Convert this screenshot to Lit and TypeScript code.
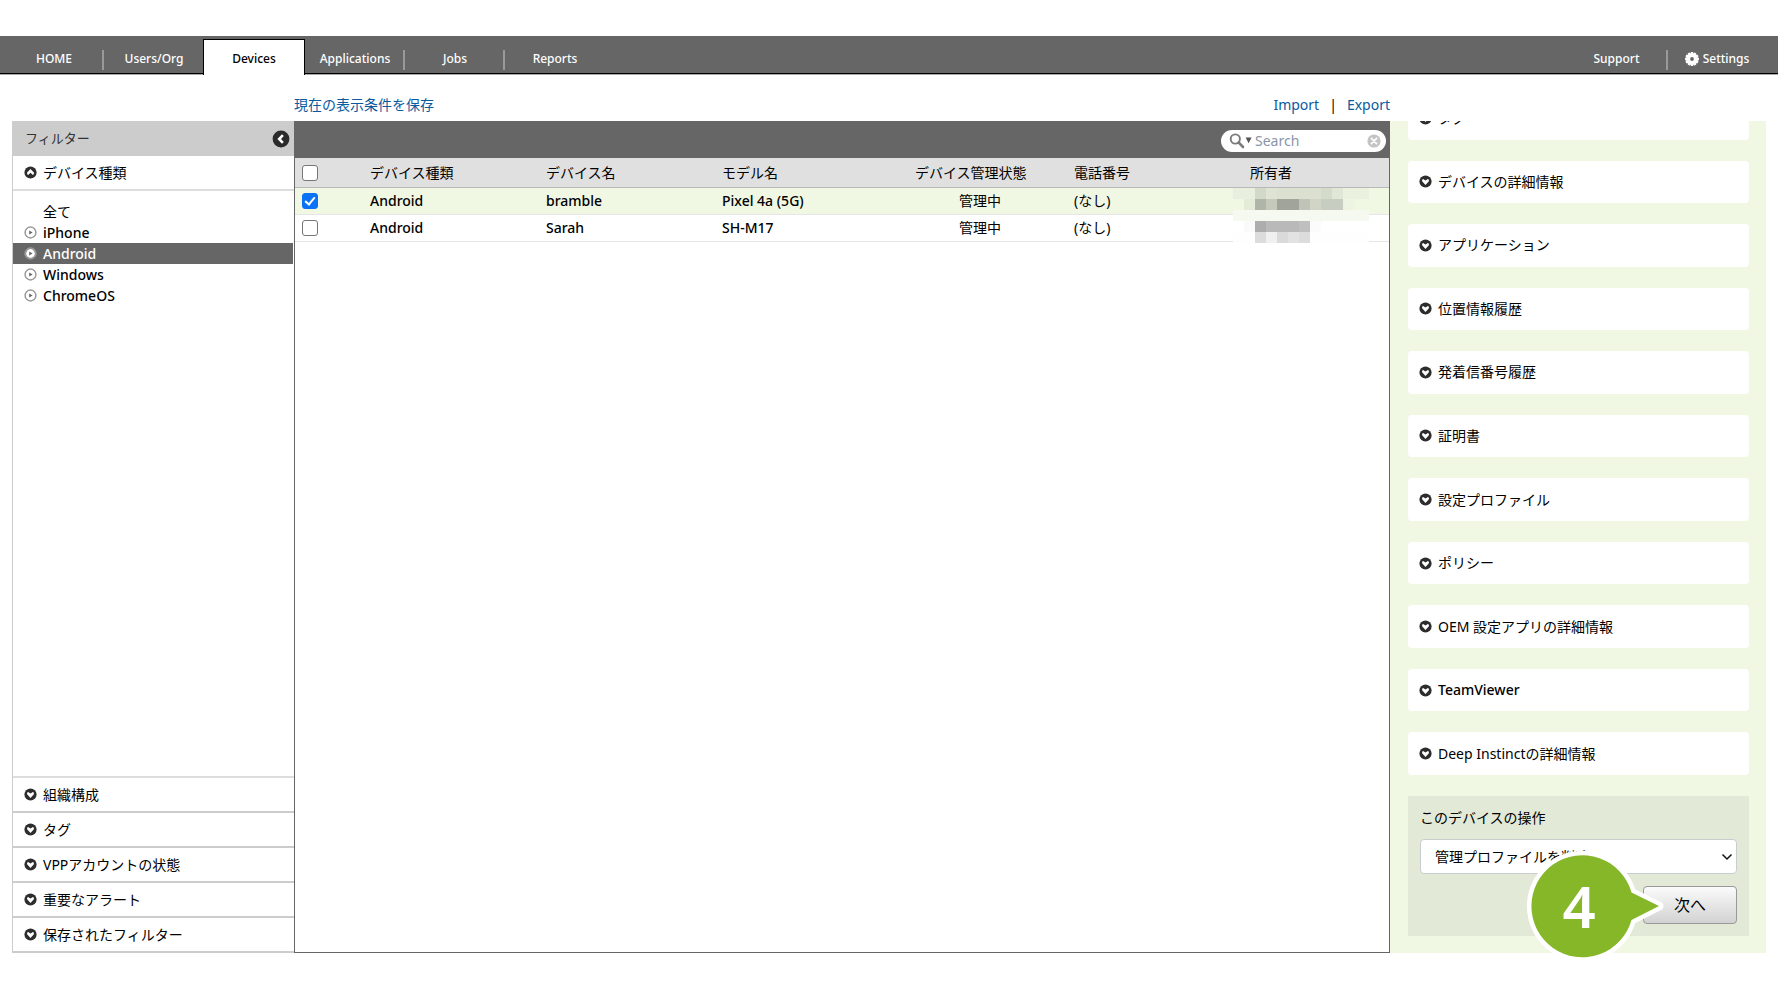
import { LitElement, html, css, svg } from "lit";
import { customElement, property, state } from "lit/decorators.js";
import { classMap } from "lit/directives/class-map.js";

const FONT = css`"Noto Sans", "Noto Sans CJK JP", sans-serif`;

/* Latin-only labels are set in medium, Japanese ones in regular. */
const isLatin = (text: string) => /^[\x20-\x7e]+$/.test(text);

type IconName = "up" | "down" | "back" | "play" | "gear" | "lens" | "clear";

@customElement("ui-icon")
export class UiIcon extends LitElement {
  @property() name: IconName = "down";

  static styles = css`
    :host {
      display: inline-flex;
      flex: none;
      width: 13px;
      height: 13px;
    }
    :host([name="back"]) {
      width: 18px;
      height: 18px;
    }
    :host([name="gear"]) {
      width: 14px;
      height: 14px;
    }
    :host([name="lens"]) {
      width: 23px;
      height: 16px;
    }
    :host([name="clear"]) {
      width: 14px;
      height: 14px;
    }
    svg {
      width: 100%;
      height: 100%;
      display: block;
    }
  `;

  render() {
    switch (this.name) {
      case "up":
        return html`<svg viewBox="0 0 13 13" aria-hidden="true">
          <circle cx="6.5" cy="6.5" r="6.1" fill="#2d2d2d" />
          <path d="M6.5 2.9 9.9 6.6Q10.4 8.6 8.9 8.9L6.5 6.8 4.1 8.9Q2.6 8.6 3.1 6.6Z" fill="#fff" />
        </svg>`;
      case "down":
        return html`<svg viewBox="0 0 13 13" aria-hidden="true">
          <circle cx="6.5" cy="6.5" r="6.1" fill="#2d2d2d" />
          <path d="M6.5 9.9 3.1 6.2Q2.6 4.2 4.1 3.9L6.5 5.5 8.9 3.9Q10.4 4.2 9.9 6.2Z" fill="#fff" />
        </svg>`;
      case "back":
        return html`<svg viewBox="0 0 18 18" aria-hidden="true">
          <circle cx="9" cy="9" r="8.4" fill="#2b2b2b" />
          <path d="M10.9 5.2 7.2 9l3.7 3.8" fill="none" stroke="#fff" stroke-width="2.6" />
        </svg>`;
      case "play":
        return html`<svg viewBox="0 0 13 13" aria-hidden="true">
          <circle cx="6.5" cy="6.5" r="5.4" fill="none" stroke="#9a9a9a" stroke-width="1.5" />
          <circle cx="6.5" cy="6.5" r="4.4" fill="#fff" />
          <path d="M5.2 4.4 8.6 6.5 5.2 8.6Z" fill="#666" />
        </svg>`;
      case "gear":
        return html`<svg viewBox="0 0 14 14" aria-hidden="true">
          ${[0, 30, 60, 90, 120, 150].map(
            (a) => svg`<rect x="5.6" y="0" width="2.8" height="14" rx="1" fill="#fff" transform="rotate(${a} 7 7)" />`,
          )}
          <circle cx="7" cy="7" r="5.8" fill="#fff" />
          <circle cx="7" cy="7" r="1.9" fill="#666" />
        </svg>`;
      case "lens":
        return html`<svg viewBox="0 0 23 16" aria-hidden="true">
          <circle cx="6.3" cy="6" r="4.6" fill="none" stroke="#7b7b7b" stroke-width="1.9" />
          <path d="M9.6 9.4 14 14" stroke="#7b7b7b" stroke-width="2.6" stroke-linecap="round" />
          <path d="M16.6 4.4h6l-3 5.8Z" fill="#555" />
        </svg>`;
      case "clear":
        return html`<svg viewBox="0 0 14 14" aria-hidden="true">
          <circle cx="7" cy="7" r="6.6" fill="#c4c4c4" />
          <path d="M4.4 4.4 9.6 9.6M9.6 4.4 4.4 9.6" stroke="#fff" stroke-width="1.7" stroke-linecap="round" />
        </svg>`;
    }
  }
}

@customElement("nav-bar")
export class NavBar extends LitElement {
  @state() private active = "Devices";

  static styles = css`
    :host {
      display: block;
      font: 500 12px/20px ${FONT};
    }
    .bar {
      display: flex;
      align-items: stretch;
      height: 37px;
      padding-left: 4px;
      background: #666;
      border-bottom: 1px solid #000;
      box-shadow: 0 1px 0 #aaa;
    }
    .tab {
      display: flex;
      align-items: center;
      justify-content: center;
      box-sizing: border-box;
      width: 100px;
      padding-top: 8px;
      color: #fff;
      text-decoration: none;
    }
    .divided {
      background: linear-gradient(#999, #999) right 14px / 2px 20px no-repeat;
    }
    .active {
      position: relative;
      width: 102px;
      margin: 3px 0 -2px -1px;
      padding-top: 3px;
      color: #000;
      background: #fff;
      border: 1px solid #000;
      border-bottom: 0;
    }
    .side {
      display: flex;
      margin-left: auto;
    }
    .support {
      width: 103px;
    }
    .settings {
      width: 110px;
      gap: 4px;
      padding-right: 12px;
    }
  `;

  render() {
    const tabs = ["HOME", "Users/Org", "Devices", "Applications", "Jobs", "Reports"];
    return html`<nav class="bar">
      ${tabs.map((t) => {
        const active = t === this.active;
        const divided = t === "HOME" || t === "Applications" || t === "Jobs";
        return html`<a
          href="#"
          class=${classMap({ tab: true, active, divided: divided && !active })}
          @click=${(e: Event) => {
            e.preventDefault();
            this.active = t;
          }}
          >${t}</a
        >`;
      })}
      <div class="side">
        <a href="#" class="tab support divided">Support</a>
        <a href="#" class="tab settings"><ui-icon name="gear"></ui-icon>Settings</a>
      </div>
    </nav>`;
  }
}

@customElement("filter-panel")
export class FilterPanel extends LitElement {
  @state() private selected = "Android";

  static styles = css`
    :host {
      display: flex;
      flex-direction: column;
      box-sizing: border-box;
      font: 400 14px/20px ${FONT};
      color: #000;
      border-left: 1px solid #ccc;
    }
    button {
      box-sizing: border-box;
      font: inherit;
      color: inherit;
      background: none;
      border: 0;
      padding: 0;
      text-align: left;
      cursor: pointer;
    }
    .head {
      display: flex;
      align-items: center;
      justify-content: space-between;
      height: 35px;
      padding: 0 4px 0 12px;
      color: #333;
      font-size: 13px;
      background: #ccc;
    }
    .title {
      margin: 0 0 2px;
      font: inherit;
    }
    .collapse {
      display: flex;
    }
    .section {
      display: flex;
      align-items: center;
      gap: 6px;
      height: 35px;
      padding: 0 11px;
      border-bottom: 2px solid #ccc;
    }
    .open {
      border-color: #ddd;
    }
    .list {
      list-style: none;
      margin: 0;
      padding: 10px 1px 0 0;
      flex: 1;
      border-bottom: 2px solid #ddd;
    }
    .item {
      display: flex;
      align-items: center;
      gap: 6px;
      width: 100%;
      height: 21px;
      padding: 0 11px;
    }
    .latin {
      font-weight: 500;
    }
    .all {
      padding-left: 30px;
    }
    .selected {
      color: #fff;
      background: #666;
    }
  `;

  render() {
    return html`
      <div class="head">
        <h2 class="title">フィルター</h2>
        <button class="collapse" aria-label="フィルター"><ui-icon name="back"></ui-icon></button>
      </div>
      <button class="section open"><ui-icon name="up"></ui-icon>デバイス種類</button>
      <ul class="list">
        ${["全て", "iPhone", "Android", "Windows", "ChromeOS"].map(
          (t, i) => html`<li>
            <button
              class=${classMap({ item: true, latin: isLatin(t), all: i === 0, selected: t === this.selected })}
              @click=${() => (this.selected = t)}
            >
              ${i === 0 ? "" : html`<ui-icon name="play"></ui-icon>`}${t}
            </button>
          </li>`,
        )}
      </ul>
      ${["組織構成", "タグ", "VPPアカウントの状態", "重要なアラート", "保存されたフィルター"].map(
        (t) => html`<button class="section"><ui-icon name="down"></ui-icon>${t}</button>`,
      )}
    `;
  }
}

interface Device {
  type: string;
  name: string;
  model: string;
  status: string;
  phone: string;
}

const DEVICES: Device[] = [
  { type: "Android", name: "bramble", model: "Pixel 4a (5G)", status: "管理中", phone: "(なし)" },
  { type: "Android", name: "Sarah", model: "SH-M17", status: "管理中", phone: "(なし)" },
];

/* Redaction tiles over the owner column: [column, row, span, colour] on an 11px grid. */
const TILES: [number, number, number, string][] = [
  [0, 0, 2, "#e9efdf"], [2, 0, 1, "#d2d9c8"], [3, 0, 1, "#dee4d4"], [4, 0, 4, "#dbe0d0"],
  [8, 0, 1, "#d5dbca"], [9, 0, 1, "#e1e7d7"], [10, 0, 3, "#eaf1df"],
  [1, 1, 1, "#e4ebd9"], [2, 1, 1, "#b0b5aa"], [3, 1, 1, "#c4c9bc"], [4, 1, 2, "#a0a49a"],
  [6, 1, 1, "#bfc4b8"], [7, 1, 1, "#d0d5c7"], [8, 1, 2, "#c8cdc1"], [10, 1, 1, "#edf4e2"],
  [0, 2, 13, "#f6f9ef"],
  [1, 3, 1, "#fafafa"], [2, 3, 1, "#adadad"], [3, 3, 3, "#b9b9b9"], [6, 3, 1, "#bfbfbf"], [7, 3, 1, "#fbfbfb"],
  [0, 4, 2, "#fefefe"], [2, 4, 1, "#dcdcdc"], [3, 4, 1, "#f0f0f0"], [4, 4, 1, "#dadada"],
  [5, 4, 1, "#e2e2e2"], [6, 4, 1, "#dcdcdc"], [7, 4, 6, "#fefefe"],
];

@customElement("device-table")
export class DeviceTable extends LitElement {
  @state() private checked = new Set<string>(["bramble"]);

  static styles = css`
    :host {
      display: block;
      box-sizing: border-box;
      border: 1px solid #666;
      background: #fff;
      font: 400 14px/20px ${FONT};
      color: #000;
    }
    .toolbar {
      display: flex;
      align-items: center;
      justify-content: flex-end;
      box-sizing: border-box;
      height: 36px;
      padding: 2px 3px 0;
      background: #666;
    }
    .search {
      display: flex;
      align-items: center;
      box-sizing: border-box;
      width: 165px;
      height: 22px;
      padding: 0 5px 0 8px;
      gap: 3px;
      border-radius: 11px;
      background: #fff;
    }
    .field {
      flex: 1;
      min-width: 0;
      padding: 0;
      border: 0;
      outline: 0;
      background: none;
      font: 400 14px/20px ${FONT};
    }
    .field::placeholder {
      color: #8a94a8;
      opacity: 1;
    }
    .clear {
      display: flex;
      padding: 0;
      border: 0;
      background: none;
    }
    .grid {
      width: 100%;
      table-layout: fixed;
      border-collapse: separate;
      border-spacing: 0;
    }
    .c-check {
      width: 75px;
    }
    .c-wide {
      width: 176px;
    }
    .c-last {
      width: auto;
    }
    th,
    td {
      box-sizing: border-box;
      padding: 0;
      text-align: left;
      font-weight: 400;
      white-space: nowrap;
    }
    .latin {
      font-weight: 500;
    }
    th {
      height: 30px;
      background: #e0e0e0;
      border-bottom: 1px solid #b8b8b8;
    }
    td {
      height: 27px;
      border-bottom: 1px solid #e6e6e6;
    }
    .row-on td {
      background: #f0f7e3;
    }
    .th-status {
      padding-left: 17px;
    }
    .td-status {
      padding-right: 12px;
      text-align: center;
    }
    .check {
      padding-left: 7px;
    }
    .box {
      appearance: none;
      display: block;
      box-sizing: border-box;
      width: 16px;
      height: 16px;
      margin: 0;
      border: 1px solid #767676;
      border-radius: 3px;
      background: #fff;
    }
    .box:checked {
      border-color: #0a72f5;
      background: #0a72f5;
    }
    .box:checked::before {
      content: "";
      display: block;
      width: 4px;
      height: 8px;
      margin: 1px 0 0 4px;
      border: solid #fff;
      border-width: 0 2px 2px 0;
      transform: rotate(40deg);
    }
    .owner {
      position: relative;
    }
    .tiles {
      position: absolute;
      left: -17px;
      top: 0;
      z-index: 1;
      width: 136px;
      height: 55px;
    }
  `;

  private toggle(name: string) {
    const next = new Set(this.checked);
    next.has(name) ? next.delete(name) : next.add(name);
    this.checked = next;
  }

  render() {
    return html`
      <div class="toolbar">
        <div class="search">
          <ui-icon name="lens"></ui-icon>
          <input class="field" type="text" placeholder="Search" aria-label="Search" />
          <button class="clear" aria-label="Clear"><ui-icon name="clear"></ui-icon></button>
        </div>
      </div>
      <table class="grid">
        <colgroup>
          <col class="c-check" />
          <col class="c-wide" />
          <col class="c-wide" />
          <col class="c-wide" />
          <col class="c-wide" />
          <col class="c-wide" />
          <col class="c-last" />
        </colgroup>
        <thead>
          <tr>
            <th class="check"><input class="box" type="checkbox" aria-label="全て" /></th>
            <th>デバイス種類</th>
            <th>デバイス名</th>
            <th>モデル名</th>
            <th class="th-status">デバイス管理状態</th>
            <th>電話番号</th>
            <th>所有者</th>
          </tr>
        </thead>
        <tbody>
          ${DEVICES.map((d, i) => {
            const on = this.checked.has(d.name);
            return html`<tr class=${classMap({ "row-on": on })}>
              <td class="check">
                <input
                  class="box"
                  type="checkbox"
                  aria-label=${d.name}
                  .checked=${on}
                  @change=${() => this.toggle(d.name)}
                />
              </td>
              <td class="latin">${d.type}</td>
              <td class="latin">${d.name}</td>
              <td class="latin">${d.model}</td>
              <td class="td-status">${d.status}</td>
              <td>${d.phone}</td>
              <td class="owner">
                ${i === 0
                  ? html`<svg class="tiles" viewBox="0 0 136 55" shape-rendering="crispEdges" aria-hidden="true">
                      ${TILES.map(
                        ([x, y, w, c]) =>
                          svg`<rect x=${x * 11} y=${y * 11} width=${w * 11} height="11" fill=${c} />`,
                      )}
                    </svg>`
                  : ""}
              </td>
            </tr>`;
          })}
        </tbody>
      </table>
    `;
  }
}

@customElement("detail-panel")
export class DetailPanel extends LitElement {
  static styles = css`
    :host {
      display: flex;
      flex-direction: column;
      box-sizing: border-box;
      padding: 0 17px 17px 18px;
      background: #f0f7e3;
      font: 400 14px/20px ${FONT};
      color: #000;
    }
    .scroll {
      display: flex;
      flex-direction: column;
      flex: 1;
      overflow: hidden;
    }
    .cards {
      display: grid;
      grid-auto-rows: 1fr;
      gap: 21px;
      flex: 1;
      margin-top: -24px;
    }
    .card {
      display: flex;
      align-items: center;
      gap: 6px;
      padding: 0 11px;
      border: 0;
      border-radius: 4px;
      background: #fff;
      font: inherit;
      color: inherit;
      text-align: left;
      cursor: pointer;
    }
    .latin {
      font-weight: 500;
    }
    .ops {
      position: relative;
      display: flex;
      flex-direction: column;
      margin-top: 21px;
      padding: 12px;
      background: #e2e9d7;
    }
    .select {
      appearance: none;
      height: 35px;
      margin: 11px 0 12px;
      padding: 0 24px 0 14px;
      border: 1px solid #c8cdd0;
      border-radius: 4px;
      font: inherit;
      color: #000;
      background: #fff;
    }
    .pick {
      position: relative;
      display: grid;
    }
    .chevron {
      position: absolute;
      right: 4px;
      top: 25px;
      width: 12px;
      height: 8px;
      pointer-events: none;
    }
    .next {
      align-self: flex-end;
      width: 94px;
      height: 38px;
      padding: 0;
      border: 1px solid #999;
      border-radius: 4px;
      background: linear-gradient(#fbfbfb, #d2d2d2);
      font: 400 16px/20px ${FONT};
      color: #000;
    }
    .step {
      position: absolute;
      right: 83px;
      top: 53px;
      width: 140px;
      height: 114px;
      pointer-events: none;
    }
    .num {
      font: 600 58px ${FONT};
      fill: #fff;
    }
  `;

  render() {
    const items = [
      "タグ",
      "デバイスの詳細情報",
      "アプリケーション",
      "位置情報履歴",
      "発着信番号履歴",
      "証明書",
      "設定プロファイル",
      "ポリシー",
      "OEM 設定アプリの詳細情報",
      "TeamViewer",
      "Deep Instinctの詳細情報",
    ];
    return html`
      <div class="scroll">
        <div class="cards">
          ${items.map(
            (t) => html`<button class=${classMap({ card: true, latin: isLatin(t) })}>
              <ui-icon name="down"></ui-icon>${t}
            </button>`,
          )}
        </div>
      </div>
      <div class="ops">
        <label for="op">このデバイスの操作</label>
        <div class="pick">
          <select class="select" id="op">
            <option>管理プロファイルを削除</option>
          </select>
          <svg class="chevron" viewBox="0 0 12 8" aria-hidden="true">
            <path d="M1.5 1.5 6 6l4.5-4.5" fill="none" stroke="#111" stroke-width="1.5" />
          </svg>
        </div>
        <button class="next">次へ</button>
        <svg class="step" viewBox="0 0 140 114" aria-hidden="true">
          <path
            d="M105.5 43.5 133 57 105.5 71A51 51 0 1 1 105.5 43.5Z"
            fill="#86b729"
            stroke="#fff"
            stroke-width="9"
            stroke-linejoin="round"
            paint-order="stroke"
          />
          <text class="num" x="53" y="79" text-anchor="middle">4</text>
        </svg>
      </div>
    `;
  }
}

@customElement("app-root")
export class AppRoot extends LitElement {
  static styles = css`
    :host {
      display: flex;
      flex-direction: column;
      box-sizing: border-box;
      min-height: 100vh;
      padding: 36px 0 47px;
      background: #fff;
      font: 400 14px/20px ${FONT};
    }
    .body {
      display: grid;
      grid-template: 47px 1fr / 282px 1fr 376px;
      flex: 1;
      padding: 0 12px;
    }
    .links {
      grid-column: 2;
      display: flex;
      align-items: center;
      justify-content: space-between;
      padding-top: 14px;
    }
    .io {
      display: flex;
      gap: 10px;
    }
    a {
      color: #0a5a9e;
      text-decoration: none;
    }
    .filters {
      grid-column: 1;
    }
  `;

  render() {
    return html`
      <nav-bar></nav-bar>
      <div class="body">
        <div class="links">
          <a href="#">現在の表示条件を保存</a>
          <div class="io"><a href="#">Import</a><span>|</span><a href="#">Export</a></div>
        </div>
        <filter-panel class="filters"></filter-panel>
        <device-table></device-table>
        <detail-panel></detail-panel>
      </div>
    `;
  }
}
